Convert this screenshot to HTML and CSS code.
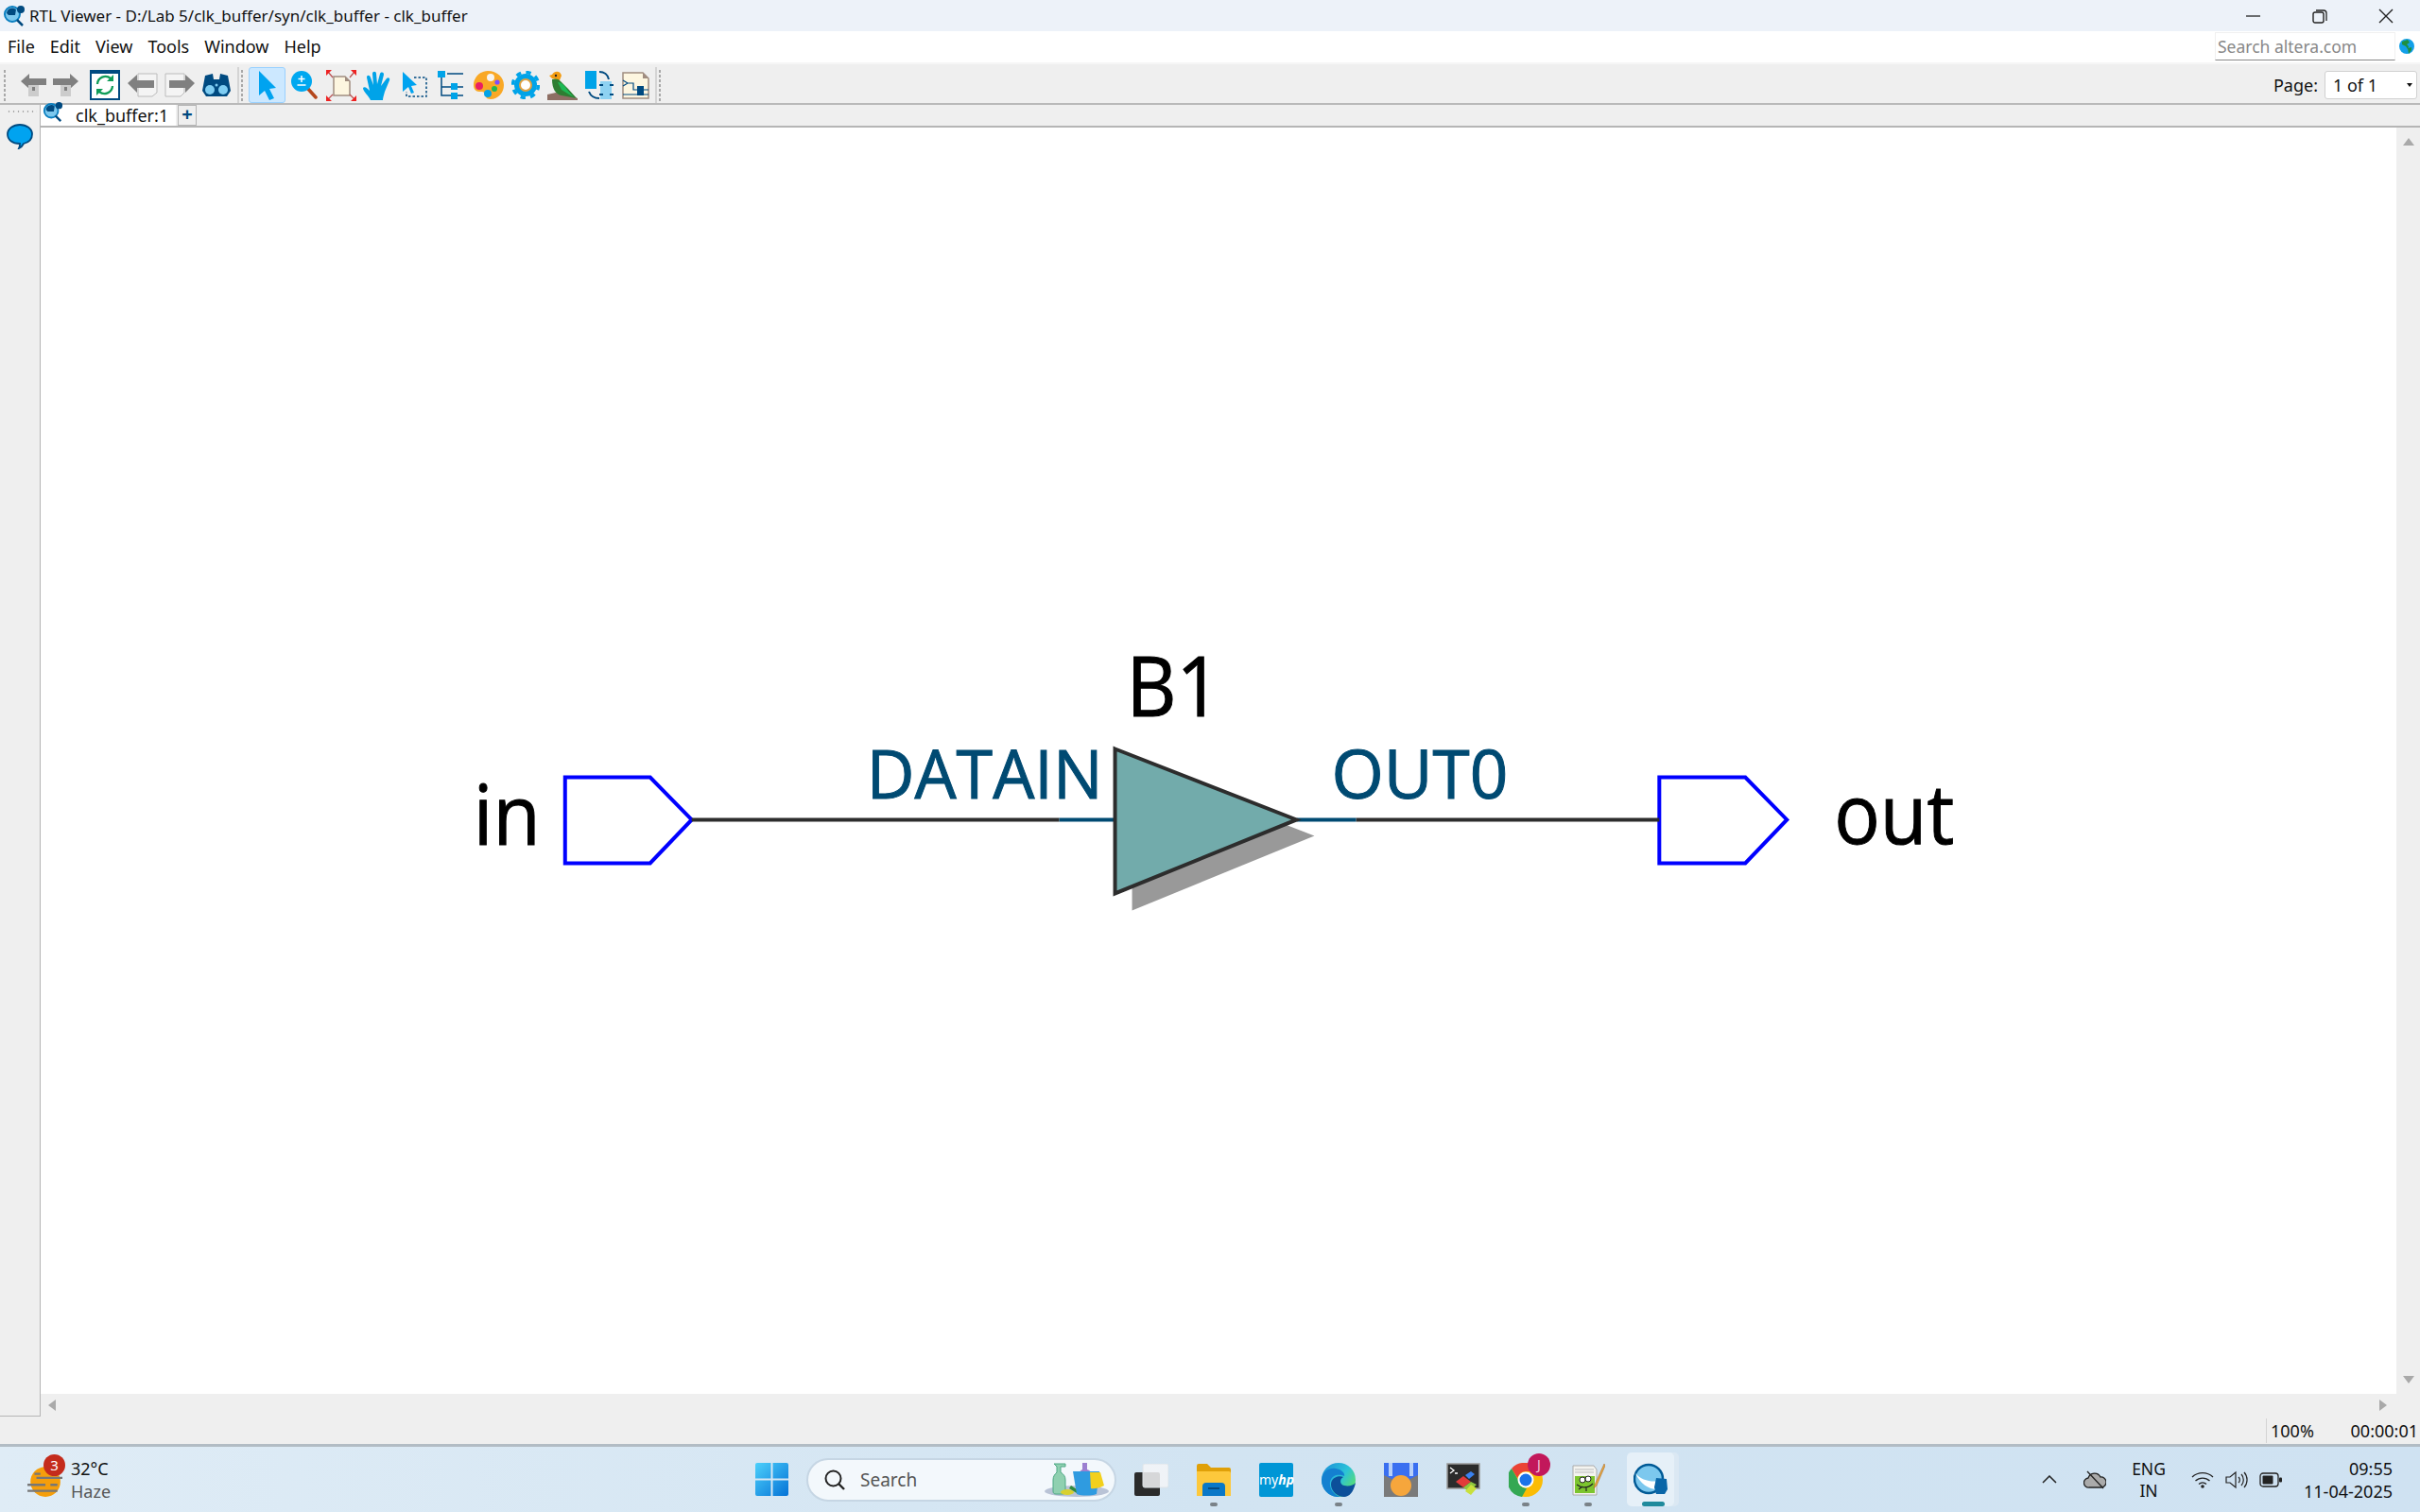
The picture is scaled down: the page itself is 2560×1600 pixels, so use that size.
FILE: index.html
```html
<!DOCTYPE html>
<html lang="en">
<head>
    <meta charset="UTF-8">
    <title>RTL Viewer - D:/Lab 5/clk_buffer/syn/clk_buffer - clk_buffer</title>
    <link rel="stylesheet" href="styles.css">
</head>
<body>

    <!-- Title bar -->
    <div class="titlebar">
        <svg class="app-icon" viewBox="0 0 24 24">
            <circle cx="10" cy="10" r="8" fill="#7cc8ee" stroke="#0a7fc0" stroke-width="2"/>
            <path d="M4 9a6 6 0 0 1 10-4l-1 6H6z" fill="#004a80"/>
            <circle cx="19" cy="5" r="4" fill="#004a80"/>
            <path d="M15 16l6 6" stroke="#004a80" stroke-width="2.5"/>
        </svg>
        <span class="title-text">RTL Viewer - D:/Lab 5/clk_buffer/syn/clk_buffer - clk_buffer</span>
        <div class="win-buttons">
            <svg class="win-btn" viewBox="0 0 16 16"><path d="M0 8h15" stroke="#222" stroke-width="1.3"/></svg>
            <svg class="win-btn" viewBox="0 0 16 16"><rect x="1" y="4" width="11" height="11" rx="2" fill="none" stroke="#222" stroke-width="1.4"/><path d="M4 2h8a3 3 0 0 1 3 3v8" fill="none" stroke="#222" stroke-width="1.3"/></svg>
            <svg class="win-btn" viewBox="0 0 16 16"><path d="M1 1l14 14M15 1L1 15" stroke="#222" stroke-width="1.4"/></svg>
        </div>
    </div>

    <!-- Menu bar -->
    <div class="menubar">
        <span class="menu-item">File</span>
        <span class="menu-item">Edit</span>
        <span class="menu-item">View</span>
        <span class="menu-item">Tools</span>
        <span class="menu-item">Window</span>
        <span class="menu-item">Help</span>
        <div class="search-altera">Search altera.com</div>
        <svg class="globe" viewBox="0 0 16 16">
            <circle cx="8" cy="8" r="8" fill="#12a0e8"/>
            <path d="M3 3l6-2 2 3-3 2 2 2-1 3-2-3-4-2zM9 10l4-1 0 3-3 4z" fill="#1f8f3f"/>
        </svg>
    </div>

    <!-- Toolbar -->
    <div class="toolbar">
        <div class="grip"></div>
        <div class="tool tool-narrow">
            <svg viewBox="0 0 27 24" width="27" height="24"><path d="M0 8L9 0v5h18v7H9v4z" fill="#808080"/><rect x="8" y="12" width="11" height="12" fill="#ccc"/><rect x="12" y="14" width="3" height="4" fill="#808080"/></svg>
        </div>
        <div class="tool tool-narrow">
            <svg viewBox="0 0 27 24" width="27" height="24"><path d="M27 8L18 0v5H0v7h18v4z" fill="#808080"/><rect x="8" y="12" width="11" height="12" fill="#ccc"/><rect x="12" y="14" width="3" height="4" fill="#808080"/></svg>
        </div>
        <div class="tool tool-refresh">
            <svg viewBox="0 0 32 32" width="32" height="32">
                <rect x="1" y="1" width="30" height="30" fill="#fff" stroke="#004a80" stroke-width="2"/>
                <rect x="0" y="0" width="32" height="4" fill="#004a80"/>
                <path d="M8 15a8.500 8.500 0 0 1 14-6" fill="none" stroke="#0f9d58" stroke-width="2.300"/>
                <path d="M24 17a8.500 8.500 0 0 1-14 6" fill="none" stroke="#0f9d58" stroke-width="2.300"/>
                <path d="M25 5v7h-7zM7 27v-7h7z" fill="#0f9d58"/>
            </svg>
        </div>
        <div class="tool">
            <svg viewBox="0 0 32 26" width="32" height="26"><path d="M11 1h20v20l-5 4H11z" fill="#f4f4f4" stroke="#bbb"/><path d="M0 11L10 2v6h18v8H10v5z" fill="#808080"/></svg>
        </div>
        <div class="tool">
            <svg viewBox="0 0 32 26" width="32" height="26"><path d="M1 1h20v20l-4 4H1z" fill="#f4f4f4" stroke="#bbb"/><path d="M32 11L22 2v6H5v8h17v5z" fill="#808080"/></svg>
        </div>
        <div class="tool">
            <svg viewBox="0 0 30 26" width="30" height="26">
                <path d="M3 3l8-2 1 6h6l1-6 8 2 3 16-4 6H4l-4-6z" fill="#004a80"/>
                <circle cx="8" cy="18" r="5" fill="#7fcdf2"/><circle cx="22" cy="18" r="5" fill="#7fcdf2"/>
                <circle cx="15" cy="13" r="1.500" fill="#7fcdf2"/>
            </svg>
        </div>
        <div class="tool-sep"></div>
        <div class="grip"></div>
        <div class="tool tool-selected">
            <svg viewBox="0 0 24 32" width="24" height="32"><path d="M3 1l18 18-7 1 5 10-5 2-5-10-6 5z" fill="#00a3f0"/></svg>
        </div>
        <div class="tool">
            <svg viewBox="0 0 28 30" width="28" height="30">
                <path d="M17 18l9 10" stroke="#b5471c" stroke-width="3.500" stroke-linecap="round"/>
                <circle cx="11" cy="11" r="11" fill="#00a8f0"/>
                <path d="M11 5v7M7.500 8.500h7M6.500 15h9" stroke="#fff" stroke-width="1.500"/>
            </svg>
        </div>
        <div class="tool">
            <svg viewBox="0 0 32 33" width="32" height="33">
                <path d="M8 7h12l5 5v15H8z" fill="#fdf6e0" stroke="#a08d80" stroke-width="1.500"/>
                <path d="M20 7v5h5z" fill="#a08d80"/>
                <path d="M7 8L2 2M25 8l5-6M7 26l-5 5M25 26l5 5" stroke="#b55" stroke-width="1.300"/>
                <path d="M0 0h6L0 6zM32 0h-6l6 6zM0 33v-6l6 6zM32 33v-6l-6 6z" fill="#ee2222"/>
            </svg>
        </div>
        <div class="tool">
            <svg viewBox="0 0 31 31" width="31" height="31">
                <path d="M8 31c-2-5-8-9-8-13 2-2 5 1 7 3L4 7c0-3 3-3 4 0l3 8L10 3c0-3 4-3 4 0l1 11 3-11c1-2 4-2 4 1l-3 12 6-8c2-2 4 0 3 2l-5 12c-1 4-2 6-2 9z" fill="#00a3e8"/>
            </svg>
        </div>
        <div class="tool">
            <svg viewBox="0 0 26 28" width="26" height="28">
                <path d="M0 0l15 14-6 1 3 7-3 1-3-7-6 5z" fill="#00a3f0"/>
                <path d="M12 6h13v20H4v-5" fill="none" stroke="#004a80" stroke-width="1.500" stroke-dasharray="2.500 2"/>
            </svg>
        </div>
        <div class="tool">
            <svg viewBox="0 0 30 30" width="30" height="30">
                <path d="M4 7v19h10M4 17h10M10 3h17M20 17h7M20 26h7" fill="none" stroke="#004a80" stroke-width="1.500"/>
                <rect x="0" y="0" width="8" height="7" fill="#00a3e8"/>
                <rect x="14" y="13" width="7" height="7" fill="#00a3e8"/>
                <rect x="14" y="23" width="7" height="7" fill="#00a3e8"/>
            </svg>
        </div>
        <div class="tool">
            <svg viewBox="0 0 32 32" width="32" height="32">
                <path d="M15 1c10 0 17 7 17 15s-6 15-14 15c-5 0-5-3-6-6-1-2-3-2-6-2-4 0-6-3-6-7C0 8 7 1 15 1z" fill="#f9a825"/>
                <circle cx="18" cy="8" r="4" fill="#f8f4ee"/>
                <circle cx="6" cy="17" r="4" fill="#e91e63"/>
                <circle cx="25" cy="13" r="2.600" fill="#7c4dff"/>
                <circle cx="22" cy="20" r="3" fill="#1db954"/>
                <circle cx="15" cy="25" r="4" fill="#00a3e8"/>
            </svg>
        </div>
        <div class="tool">
            <svg viewBox="0 0 30 30" width="30" height="30">
                <circle cx="15" cy="15" r="9" fill="none" stroke="#00a3e8" stroke-width="6"/>
                <circle cx="15" cy="15" r="13.500" fill="none" stroke="#00a3e8" stroke-width="3.500" stroke-dasharray="5.300 5.300"/>
                <circle cx="15" cy="15" r="6" fill="#fff" stroke="#e0a040" stroke-width="2"/>
            </svg>
        </div>
        <div class="tool">
            <svg viewBox="0 0 32 32" width="32" height="32">
                <path d="M0 32v-6l9-2 12 2 11 4v2z" fill="#8d6e63"/>
                <path d="M2 6l3-1c3-5 9-4 10 1l-2 5-8-2z" fill="#f39c12"/>
                <path d="M5 10c3-1 7-1 9 2l8 8 9 10-16-3c-6-1-10-7-10-17z" fill="#2e7d32"/>
                <path d="M11 13c4 0 8 4 10 8l7 8-13-8z" fill="#1db954"/>
                <circle cx="9" cy="6" r="1.200" fill="#222"/>
            </svg>
        </div>
        <div class="tool">
            <svg viewBox="0 0 30 30" width="30" height="30">
                <rect x="0" y="0" width="12" height="19" fill="#00a3e8"/>
                <path d="M15 1c5 0 9 3 10 8M4 22c2 5 6 7 11 7" fill="none" stroke="#004a80" stroke-width="2"/>
                <rect x="16" y="11" width="12" height="19" fill="#8ed2f2"/>
                <path d="M15 15h15M15 25h15" stroke="#004a80" stroke-width="2" stroke-dasharray="4 7"/>
            </svg>
        </div>
        <div class="tool">
            <svg viewBox="0 0 29 29" width="29" height="29">
                <path d="M1 1h21l6 6v21H1z" fill="#fdf6e0" stroke="#a08d80" stroke-width="1.500"/>
                <path d="M22 1v6h6z" fill="#a08d80"/>
                <path d="M1 9l5 3-5 3M6 12h6v7h16M1 24h27" fill="none" stroke="#004a80" stroke-width="1.200"/>
                <rect x="16" y="15" width="7" height="10" fill="#004a80"/>
            </svg>
        </div>
        <div class="tool-sep tool-sep-end"></div>
        <div class="grip"></div>
        <span class="page-label">Page:</span>
        <div class="page-combo">1 of 1<span class="combo-arrow"></span></div>
    </div>

    <!-- Viewer -->
    <div class="workspace">
        <div class="sidebar">
            <div class="sidebar-grip"></div>
            <svg class="balloon" viewBox="0 0 28 27">
                <path d="M14 1c7 0 13 4 13 10s-5 9-9 10c-1 2-3 4-5 5 1-2 1-3 1-5C6 21 1 17 1 11S7 1 14 1z" fill="#00a3f0" stroke="#004a80" stroke-width="1.800"/>
            </svg>
        </div>
        <div class="main">
            <div class="tabbar">
                <div class="tab">
                    <svg class="tab-icon" viewBox="0 0 24 24">
                        <circle cx="10" cy="10" r="8" fill="#7cc8ee" stroke="#0a7fc0" stroke-width="2"/>
                        <path d="M4 9a6 6 0 0 1 10-4l-1 6H6z" fill="#004a80"/>
                        <circle cx="19" cy="4" r="4" fill="#004a80"/>
                        <path d="M15 16l6 6" stroke="#004a80" stroke-width="2.500"/>
                    </svg>
                    <span>clk_buffer:1</span>
                </div>
                <div class="tab-add">+</div>
            </div>
            <div class="canvas-row">
                <div class="canvas">
                    <svg class="schematic" viewBox="42 135 2493 1339">
                        <text class="pin-name" x="500" y="894" textLength="71" lengthAdjust="spacingAndGlyphs">in</text>
                        <text class="pin-name" x="1940" y="893" textLength="127" lengthAdjust="spacingAndGlyphs">out</text>
                        <text class="inst-name" x="1191" y="757" textLength="100" lengthAdjust="spacingAndGlyphs">B1</text>
                        <text class="port-name" x="916" y="845" textLength="250" lengthAdjust="spacingAndGlyphs">DATAIN</text>
                        <text class="port-name" x="1408" y="845" textLength="187" lengthAdjust="spacingAndGlyphs">OUT0</text>

                        <path class="pin" d="M597 822H687L731 867L687 913H597Z"/>
                        <path class="pin" d="M1755 822H1846L1890 867L1846 913H1755Z"/>

                        <path class="wire" d="M731 867H1120M1434 867H1755"/>
                        <path class="wire-port" d="M1120 867H1179M1371 867H1434"/>

                        <polygon class="shadow" points="1197,809 1390,884 1197,963"/>
                        <polygon class="buffer" points="1179,792 1371,867 1179,945"/>
                    </svg>
                </div>
                <div class="vscroll">
                    <span class="arrow arrow-up"></span>
                    <span class="arrow arrow-down"></span>
                </div>
            </div>
            <div class="hscroll">
                <span class="arrow arrow-left"></span>
                <span class="arrow arrow-right"></span>
            </div>
        </div>
    </div>

    <!-- Status bar -->
    <div class="statusbar">
        <span class="status-zoom">100%</span>
        <span class="status-time">00:00:01</span>
    </div>

    <!-- Windows taskbar -->
    <div class="taskbar">
        <div class="weather">
            <div class="weather-icon">
                <svg viewBox="0 0 36 36" width="38" height="38">
                    <circle cx="19" cy="19" r="15" fill="#f59e0b"/>
                    <path d="M8 11h6M10 15h26M1 22h18M24 22h7M1 28h30" stroke="#777" stroke-width="2.200"/>
                </svg>
                <span class="weather-badge">3</span>
            </div>
            <div class="weather-text">
                <span class="weather-temp">32°C</span>
                <span class="weather-desc">Haze</span>
            </div>
        </div>

        <div class="task-center">
            <div class="task-icon">
                <svg viewBox="0 0 35 35" width="35" height="35">
                    <defs><linearGradient id="win" x1="0" y1="0" x2="1" y2="1"><stop offset="0" stop-color="#4cd0fb"/><stop offset="1" stop-color="#0472d6"/></linearGradient></defs>
                    <path d="M0 2a2 2 0 0 1 2-2h14.500v16.500H0zM18.500 0H33a2 2 0 0 1 2 2v14.500H18.500zM0 18.500h16.500V35H2a2 2 0 0 1-2-2zM18.500 18.500H35V33a2 2 0 0 1-2 2H18.500z" fill="url(#win)"/>
                </svg>
            </div>
            <div class="task-search">
                <svg viewBox="0 0 22 22" width="22" height="22"><circle cx="9.500" cy="9.500" r="8" fill="none" stroke="#222" stroke-width="2"/><path d="M15 15l6 6" stroke="#222" stroke-width="2.400"/></svg>
                <span class="task-search-text">Search</span>
                <svg class="task-search-art" viewBox="0 0 68 38" width="68" height="38">
                    <ellipse cx="34" cy="31" rx="34" ry="6" fill="#b9c3d6"/>
                    <path d="M10 2h12v3h-5v6c3 2 5 4 5 8v12c0 2-1 3-3 3h-7c-2 0-3-1-3-3V19c0-4 2-6 4-8V5z" fill="#8fd0b0" stroke="#4da884" stroke-width="1"/>
                    <ellipse cx="24" cy="32" rx="7" ry="3" fill="#d8d030"/>
                    <path d="M28 25l6 4v4l-8-5z" fill="#2e8b40"/>
                    <path d="M40 1h5v7c3 1 4 2 4 5H37c0-3 1-4 3-5z" fill="#9b7fd0"/>
                    <path d="M30 10h28l-3 24c-6 2-16 2-21 0z" fill="#2f9be0"/>
                    <path d="M48 11h11l4 14c-4 2-10 4-14 3z" fill="#f2d01c"/>
                </svg>
            </div>
            <div class="task-icon">
                <svg viewBox="0 0 36 34" width="36" height="34">
                    <rect x="0" y="9" width="27" height="25" rx="2" fill="#2b2b2b"/>
                    <rect x="9" y="0" width="27" height="25" rx="2" fill="#f4f6f8" fill-opacity="0.850" stroke="#dfe4e8"/>
                </svg>
            </div>
            <div class="task-icon has-dot">
                <svg viewBox="0 0 36 35" width="36" height="35">
                    <path d="M0 3a2 2 0 0 1 2-2h9l4 4h19a2 2 0 0 1 2 2v6H0z" fill="#e0a008"/>
                    <path d="M0 9h34a2 2 0 0 1 2 2v24H0z" fill="#fdc83c"/>
                    <path d="M6 25a4 4 0 0 1 4-4h16a4 4 0 0 1 4 4v10H6z" fill="#0a78c8"/>
                    <path d="M12 27h12" stroke="#064a80" stroke-width="2"/>
                </svg>
            </div>
            <div class="task-icon">
                <div class="myhp"><span>my</span><b>hp</b></div>
            </div>
            <div class="task-icon has-dot">
                <svg viewBox="0 0 36 36" width="36" height="36">
                    <defs><linearGradient id="edge" x1="0" y1="0" x2="1" y2="0.700"><stop offset="0" stop-color="#1a8cd8"/><stop offset="0.600" stop-color="#2cc3d8"/><stop offset="1" stop-color="#5be06a"/></linearGradient></defs>
                    <circle cx="18" cy="18" r="18" fill="url(#edge)"/>
                    <path d="M36 21c-2 3-8 4-12 3-5-1-5-7-1-9-4-2-13 0-13 8 0 7 7 13 14 13 5 0 10-5 12-15z" fill="#0c4f9a"/>
                    <path d="M0 18C1 8 9 5 15 6c6 1 10 5 9 8-3-2-13-3-15 6-1 6 3 14 11 16C10 37 0 30 0 18z" fill="#1480d0"/>
                </svg>
            </div>
            <div class="task-icon">
                <svg viewBox="0 0 36 36" width="36" height="36">
                    <rect width="36" height="36" fill="#7a7a7a"/>
                    <path d="M0 0h36v13L26 18H10L0 13z" fill="#3a6ff0"/>
                    <path d="M5 0h4v14H5zM27 0h4v14h-4z" fill="#b8d0f8"/>
                    <circle cx="18" cy="24" r="11" fill="#f6a63c"/>
                </svg>
            </div>
            <div class="task-icon">
                <svg viewBox="0 0 36 36" width="36" height="36">
                    <rect x="1" y="1" width="34" height="26" fill="#2b2b2b" stroke="#999" stroke-width="1.500"/>
                    <path d="M4 5l4 3-4 3M9 11h3" fill="none" stroke="#fff" stroke-width="1.300"/>
                    <path d="M10 20l8-6 8 6-8 6z" fill="#e23a3a"/>
                    <path d="M20 13l6-4 4 3-6 5z" fill="#3a82f0"/>
                    <path d="M18 26l8-6 6 3-8 8z" fill="#8ec63f"/>
                    <path d="M20 30l6 4 6-7-6-4z" fill="#c8e03c"/>
                </svg>
            </div>
            <div class="task-icon has-dot chrome">
                <svg viewBox="0 0 36 36" width="36" height="36">
                    <circle cx="18" cy="18" r="18" fill="#fbbc04"/>
                    <path d="M18 0a18 18 0 0 1 15.600 9H18a9 9 0 0 0-8.800 7L3 6A18 18 0 0 1 18 0z" fill="#ea4335"/>
                    <path d="M3 6l7 12a9 9 0 0 0 9 9l-5 9A18 18 0 0 1 3 6z" fill="#34a853"/>
                    <circle cx="18" cy="18" r="8.500" fill="#fff"/>
                    <circle cx="18" cy="18" r="6.500" fill="#1a73e8"/>
                </svg>
                <span class="chrome-badge">J</span>
            </div>
            <div class="task-icon has-dot">
                <svg viewBox="0 0 35 35" width="35" height="35">
                    <path d="M1 3h22l3 4v27H1z" fill="#f4f4f0" stroke="#aaa"/>
                    <path d="M3 7h20M3 10h20" stroke="#bbb"/>
                    <rect x="3" y="14" width="21" height="18" fill="#7cc52e"/>
                    <circle cx="11" cy="18" r="3" fill="#fff" stroke="#222"/>
                    <circle cx="17" cy="17" r="3" fill="#fff" stroke="#222"/>
                    <path d="M5 23c5 4 12 4 17-1M7 28l4-3M15 25v5" stroke="#222" stroke-width="1.200" fill="none"/>
                    <path d="M34 1L24 23l-1 4 3-3L35 3z" fill="#e8a840" stroke="#a06020" stroke-width="0.500"/>
                </svg>
            </div>
            <div class="task-icon task-active">
                <svg viewBox="0 0 36 36" width="36" height="36">
                    <circle cx="16" cy="17" r="15" fill="#7cc8ee" stroke="#005a96" stroke-width="2.500"/>
                    <path d="M2 11c6 7 16 10 26 8l-3 9C16 28 7 22 2 11z" fill="#fff"/>
                    <path d="M24 16l11 1 1 11-3 5H24l-2-7z" fill="#0a66a8"/>
                </svg>
            </div>
        </div>

        <div class="tray">
            <svg class="tray-chevron" viewBox="0 0 16 9" width="16" height="9"><path d="M1 8l7-7 7 7" fill="none" stroke="#222" stroke-width="1.500"/></svg>
            <svg class="tray-cloud" viewBox="0 0 24 20" width="24" height="20">
                <path d="M6 18a5 5 0 0 1-1-10 7 7 0 0 1 13-1 5.500 5.500 0 0 1 1 11z" fill="#aaa" stroke="#222" stroke-width="1.300"/>
                <path d="M4 1l17 18" stroke="#222" stroke-width="1.300"/>
            </svg>
            <div class="tray-lang"><span>ENG</span><span>IN</span></div>
            <svg class="tray-wifi" viewBox="0 0 24 18" width="24" height="18">
                <path d="M1 6a16 16 0 0 1 22 0M4.500 10a11 11 0 0 1 15 0M8 13.500a6 6 0 0 1 8 0" fill="none" stroke="#222" stroke-width="1.300"/>
                <circle cx="12" cy="16" r="1.800" fill="#222"/>
            </svg>
            <svg class="tray-volume" viewBox="0 0 24 20" width="24" height="20">
                <path d="M1 7h4l6-5v16l-6-5H1z" fill="none" stroke="#222" stroke-width="1.200"/>
                <path d="M14 7a4 4 0 0 1 0 6M17 4a9 9 0 0 1 0 12M20 2a12 12 0 0 1 0 16" fill="none" stroke="#222" stroke-width="1.200"/>
            </svg>
            <svg class="tray-battery" viewBox="0 0 24 16" width="24" height="16">
                <rect x="1" y="1" width="19" height="14" rx="3" fill="none" stroke="#222" stroke-width="1.300"/>
                <rect x="3.500" y="3.500" width="11" height="9" rx="1" fill="#222"/>
                <rect x="21" y="5.500" width="3" height="5" rx="1" fill="#222"/>
            </svg>
            <div class="tray-clock"><span>09:55</span><span>11-04-2025</span></div>
        </div>
    </div>

</body>
</html>
```

FILE: styles.css
```css
/* Page */
body {
    margin: 0;
    width: 2560px;
    height: 1600px;
    overflow: hidden;
    background: #efefef;
    color: #111;
    font-family: "Noto Sans", "Open Sans", sans-serif;
    font-size: 18px;
    display: flex;
    flex-direction: column;
}

svg {
    display: block;
    flex: none;
}

/* Title bar */
.titlebar {
    height: 33px;
    flex: none;
    display: flex;
    align-items: center;
    background: #edf2f9;
    padding-left: 3px;
}

.app-icon {
    width: 24px;
    height: 24px;
    margin-right: 4px;
}

.title-text {
    font-size: 17px;
}

.win-buttons {
    margin-left: auto;
    display: flex;
    gap: 54px;
    padding-right: 28px;
}

.win-btn {
    width: 16px;
    height: 16px;
}

/* Menu bar */
.menubar {
    height: 35px;
    flex: none;
    display: flex;
    align-items: center;
    background: #fff;
    padding: 0 0 1px 8px;
    border-bottom: 2px solid #f6f6f6;
    box-sizing: border-box;
}

.menu-item {
    font-size: 18px;
    margin-right: 16px;
}

.search-altera {
    margin-left: auto;
    width: 191px;
    height: 30px;
    box-sizing: border-box;
    padding-left: 2px;
    line-height: 29px;
    font-size: 17.500px;
    color: #888;
    border: 1px solid #f0f0f0;
    border-bottom: 1px solid #888;
}

.globe {
    width: 16px;
    height: 16px;
    margin: 0 6px 0 4px;
}

/* Toolbar */
.toolbar {
    height: 43px;
    flex: none;
    box-sizing: border-box;
    display: flex;
    align-items: center;
    background: #efefef;
    border-bottom: 2px solid #b9b9b9;
    padding: 3px 0 0 3px;
}

.grip {
    width: 4px;
    height: 34px;
    margin: 0 5px 0 0;
    flex: none;
    background-image: radial-gradient(#a8a8a8 1px, transparent 1.200px);
    background-size: 4px 5px;
}

.tool {
    width: 39px;
    height: 38px;
    flex: none;
    box-sizing: border-box;
    display: flex;
    align-items: center;
    justify-content: center;
}

.tool-narrow {
    width: 34px;
}

.tool-narrow:nth-child(2) {
    margin-left: 6px;
}

.tool-refresh {
    margin-left: 4px;
    width: 41px;
}

.tool-selected {
    background: #cce8ff;
    border: 1px solid #99d1ff;
    border-radius: 3px;
}

.tool-sep {
    width: 2px;
    height: 38px;
    flex: none;
    margin: 0 1px 0 3px;
    background: #d4d4d4;
}

.tool-sep-end {
    margin-left: 1px;
}

.page-label {
    margin-left: auto;
    margin-right: 7px;
    font-size: 18px;
}

.page-combo {
    width: 98px;
    height: 30px;
    box-sizing: border-box;
    margin-right: 3px;
    padding-left: 8px;
    line-height: 28px;
    font-size: 18px;
    background: #fff;
    border: 1px solid #d0d0d0;
    border-radius: 3px;
    position: relative;
}

.combo-arrow {
    position: absolute;
    right: 4px;
    top: 12px;
    border-left: 3.500px solid transparent;
    border-right: 3.500px solid transparent;
    border-top: 4px solid #111;
}

/* Workspace */
.workspace {
    height: 1388px;
    flex: none;
    display: flex;
}

.sidebar {
    width: 43px;
    flex: none;
    box-sizing: border-box;
    background: #efefef;
    border-right: 1px solid #b5b5b5;
    border-bottom: 1px solid #b5b5b5;
}

.sidebar-grip {
    width: 32px;
    height: 4px;
    margin: 5px 0 0 7px;
    background-image: radial-gradient(#a8a8a8 1px, transparent 1.200px);
    background-size: 5px 4px;
}

.balloon {
    width: 28px;
    height: 27px;
    margin: 11px 0 0 7px;
}

.main {
    flex: 1;
    min-width: 0;
    display: flex;
    flex-direction: column;
}

.tabbar {
    height: 24px;
    flex: none;
    box-sizing: border-box;
    display: flex;
    align-items: flex-end;
    border-bottom: 2px solid #b5b5b5;
    background: #efefef;
}

.tab {
    width: 143px;
    height: 22px;
    box-sizing: border-box;
    display: flex;
    align-items: center;
    background: #fff;
    font-size: 18px;
    position: relative;
    padding-left: 37px;
}

.tab-icon {
    position: absolute;
    left: 2px;
    top: -3px;
    width: 22px;
    height: 22px;
}

.tab-add {
    width: 20px;
    height: 22px;
    box-sizing: border-box;
    margin-left: 2px;
    line-height: 18px;
    text-align: center;
    font-size: 20px;
    font-weight: bold;
    color: #004a80;
    background: #efefef;
    border: 1px solid #b5b5b5;
}

.canvas-row {
    flex: 1;
    min-height: 0;
    display: flex;
}

.canvas {
    flex: 1;
    min-width: 0;
    background: #fff;
}

.schematic {
    width: 100%;
    height: 100%;
}

/* Schematic */
.pin-name,
.inst-name {
    font-family: "Open Sans", sans-serif;
    font-size: 88px;
    fill: #000;
    stroke: #000;
    stroke-width: 1;
}

.port-name {
    font-family: "Open Sans", sans-serif;
    font-size: 71px;
    fill: #004a72;
    stroke: #004a72;
    stroke-width: 1;
}

.pin {
    fill: #fff;
    stroke: #0000ff;
    stroke-width: 4;
}

.wire {
    fill: none;
    stroke: #2d2d2d;
    stroke-width: 4;
}

.wire-port {
    fill: none;
    stroke: #004a72;
    stroke-width: 4;
}

.shadow {
    fill: #999;
}

.buffer {
    fill: #72abab;
    stroke: #2d2d2d;
    stroke-width: 4;
}

/* Scrollbars */
.vscroll {
    width: 25px;
    flex: none;
    display: flex;
    flex-direction: column;
    justify-content: space-between;
    align-items: center;
    padding: 11px 0 11px;
    box-sizing: border-box;
    background: #efefef;
}

.hscroll {
    height: 24px;
    flex: none;
    box-sizing: border-box;
    display: flex;
    justify-content: space-between;
    align-items: center;
    padding: 0 35px 0 8px;
    background: #efefef;
}

.arrow {
    display: block;
    width: 0;
    height: 0;
}

.arrow-up {
    border-left: 6px solid transparent;
    border-right: 6px solid transparent;
    border-bottom: 8px solid #a9a9a9;
}

.arrow-down {
    border-left: 6px solid transparent;
    border-right: 6px solid transparent;
    border-top: 8px solid #a9a9a9;
}

.arrow-left {
    border-top: 6px solid transparent;
    border-bottom: 6px solid transparent;
    border-right: 8px solid #a9a9a9;
}

.arrow-right {
    border-top: 6px solid transparent;
    border-bottom: 6px solid transparent;
    border-left: 8px solid #a9a9a9;
}

/* Status bar */
.statusbar {
    height: 29px;
    flex: none;
    display: flex;
    align-items: center;
    background: #efefef;
    font-size: 18px;
}

.status-zoom {
    margin-left: 2397px;
    padding-left: 4px;
    height: 26px;
    line-height: 26px;
    border-left: 1px solid #d4d4d4;
}

.status-time {
    margin-left: auto;
    margin-right: 2px;
}

/* Taskbar */
.taskbar {
    height: 72px;
    flex: none;
    box-sizing: border-box;
    display: flex;
    align-items: center;
    background: linear-gradient(90deg, #dfecf6, #d2e4f2 50%, #cfe2f2);
    border-top: 3px solid #b2bcc4;
    position: relative;
}

.weather {
    width: 783px;
    flex: none;
    box-sizing: border-box;
    display: flex;
    align-items: center;
    padding-left: 28px;
}

.weather-icon {
    position: relative;
    width: 38px;
    height: 38px;
    margin-top: 2px;
}

.weather-badge {
    position: absolute;
    left: 18px;
    top: -9px;
    width: 23px;
    height: 23px;
    border-radius: 50%;
    background: #c42b1c;
    color: #fff;
    font-size: 15px;
    line-height: 23px;
    text-align: center;
}

.weather-text {
    display: flex;
    flex-direction: column;
    margin-left: 9px;
    font-size: 18px;
    line-height: 24px;
}

.weather-desc {
    color: #555;
}

.task-center {
    display: flex;
    align-items: center;
}

.task-icon {
    width: 66px;
    height: 57px;
    flex: none;
    position: relative;
    display: flex;
    align-items: center;
    justify-content: center;
}

.has-dot::after {
    content: "";
    position: absolute;
    left: 29px;
    bottom: 0;
    width: 8px;
    height: 4px;
    border-radius: 2px;
    background: #7a8288;
}

.task-search {
    width: 328px;
    height: 46px;
    flex: none;
    box-sizing: border-box;
    margin: 0 4px;
    padding: 0 6px 0 17px;
    display: flex;
    align-items: center;
    background: #f3f8fc;
    border: 2px solid #c6d6e4;
    border-radius: 23px;
}

.task-search-text {
    margin-left: 16px;
    font-size: 19px;
    color: #555;
}

.task-search-art {
    margin-left: auto;
}

.myhp {
    width: 36px;
    height: 36px;
    border-radius: 2px;
    background: #0096d6;
    color: #fff;
    font-size: 14px;
    line-height: 36px;
    text-align: center;
}

.myhp b {
    font-style: italic;
}

.chrome-badge {
    position: absolute;
    left: 35px;
    top: 1px;
    width: 24px;
    height: 24px;
    border-radius: 50%;
    background: #c2185b;
    color: #f4c0d4;
    font-size: 14px;
    line-height: 24px;
    text-align: center;
}

.task-active {
    width: 50px;
    margin-left: 8px;
    background: #e6f0f8;
    border-radius: 5px;
    box-shadow: 5px 0 0 #dbe8f3;
}

.task-active::after {
    content: "";
    position: absolute;
    left: 16px;
    bottom: 0;
    width: 24px;
    height: 5px;
    border-radius: 3px;
    background: #1f8a9c;
}

.tray {
    margin-left: auto;
    display: flex;
    align-items: center;
    padding-right: 29px;
}

.tray-lang {
    display: flex;
    flex-direction: column;
    align-items: center;
    width: 36px;
    margin: 0 27px;
    font-size: 17.500px;
    line-height: 23px;
}

.tray-cloud {
    margin-left: 28px;
}

.tray-volume {
    margin-left: 12px;
}

.tray-battery {
    margin-left: 12px;
}

.tray-clock {
    display: flex;
    flex-direction: column;
    align-items: flex-end;
    margin-left: 23px;
    font-size: 18px;
    line-height: 24px;
}
```
